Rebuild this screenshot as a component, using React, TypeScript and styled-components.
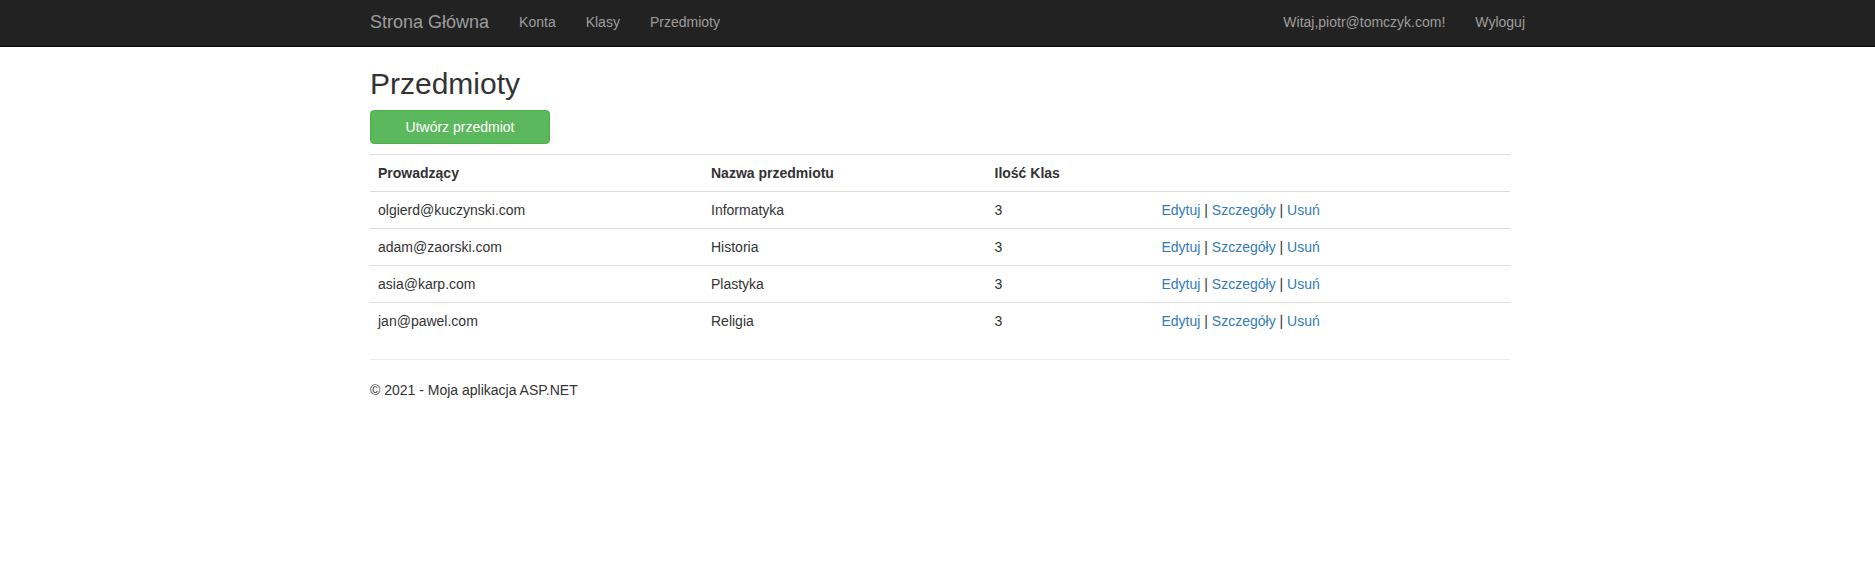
import React from "react";
import styled, { createGlobalStyle } from "styled-components";

const GlobalStyle = createGlobalStyle`
  html, body {
    margin: 0;
    padding: 0;
    background: #fff;
  }
  body {
    font-family: "Liberation Sans", Arial, Helvetica, sans-serif;
    font-size: 14px;
    line-height: 1.42857143;
    color: #333;
  }
  * { box-sizing: border-box; }
`;

const Navbar = styled.nav`
  background: #222;
  border-bottom: 1px solid #080808;
  height: 47px;
`;

const Container = styled.div`
  width: 1170px;
  margin: 0 0 0 calc(50% - 582.5px);
  padding: 0 15px;
`;

const NavInner = styled(Container)`
  display: flex;
  height: 46px;
`;

const Brand = styled.a`
  margin-left: -15px;
  padding: 12px 15px 14px;
  font-size: 18px;
  line-height: 20px;
  color: #9d9d9d;
  text-decoration: none;
`;

const NavList = styled.ul<{ $right?: boolean }>`
  display: flex;
  list-style: none;
  margin: 0;
  padding: 0;
  margin-left: ${(p) => (p.$right ? "auto" : "0")};
  margin-right: ${(p) => (p.$right ? "-30px" : "0")};
`;

const NavLink = styled.a`
  display: block;
  padding: 12px 15px 14px;
  line-height: 20px;
  color: #9d9d9d;
  text-decoration: none;
`;

const Title = styled.h2`
  margin: 20px 0 10px;
  font-size: 30px;
  font-weight: 500;
  line-height: 1.1;
  color: #333;
`;

const ButtonRow = styled.p`
  margin: 0 0 10px;
`;

const SuccessButton = styled.a`
  display: inline-block;
  width: 180px;
  padding: 6px 12px;
  font-size: 14px;
  line-height: 20px;
  text-align: center;
  color: #fff;
  background: #5cb85c;
  border: 1px solid #4cae4c;
  border-radius: 4px;
  text-decoration: none;
  vertical-align: middle;
`;

const Table = styled.table`
  width: 100%;
  border-collapse: collapse;
  border-spacing: 0;
  table-layout: fixed;
  margin-bottom: 20px;
`;

const Th = styled.th`
  padding: 8px;
  line-height: 20px;
  text-align: left;
  font-weight: bold;
  vertical-align: top;
  border-top: 1px solid #ddd;
`;

const Td = styled.td`
  padding: 8px;
  line-height: 20px;
  vertical-align: top;
  border-top: 1px solid #ddd;
`;

const Link = styled.a`
  color: #337ab7;
  text-decoration: none;
`;

const Rule = styled.hr`
  margin: 20px 0;
  border: 0;
  border-top: 1px solid #eee;
  height: 0;
`;

const FooterText = styled.p`
  margin: 0 0 10px;
`;

const rows = [
  { teacher: "olgierd@kuczynski.com", subject: "Informatyka", count: 3 },
  { teacher: "adam@zaorski.com", subject: "Historia", count: 3 },
  { teacher: "asia@karp.com", subject: "Plastyka", count: 3 },
  { teacher: "jan@pawel.com", subject: "Religia", count: 3 },
];

export default function App() {
  return (
    <>
      <GlobalStyle />
      <Navbar>
        <NavInner>
          <Brand href="#">Strona Główna</Brand>
          <NavList>
            <li><NavLink href="#">Konta</NavLink></li>
            <li><NavLink href="#">Klasy</NavLink></li>
            <li><NavLink href="#">Przedmioty</NavLink></li>
          </NavList>
          <NavList $right>
            <li><NavLink href="#">Witaj,piotr@tomczyk.com!</NavLink></li>
            <li><NavLink href="#">Wyloguj</NavLink></li>
          </NavList>
        </NavInner>
      </Navbar>
      <Container>
        <Title>Przedmioty</Title>
        <ButtonRow>
          <SuccessButton href="#">Utwórz przedmiot</SuccessButton>
        </ButtonRow>
        <Table>
          <colgroup>
            <col style={{ width: 333 }} />
            <col style={{ width: 283.5 }} />
            <col style={{ width: 167 }} />
            <col />
          </colgroup>
          <tbody>
            <tr>
              <Th>Prowadzący</Th>
              <Th>Nazwa przedmiotu</Th>
              <Th>Ilość Klas</Th>
              <Th></Th>
            </tr>
            {rows.map((r) => (
              <tr key={r.teacher}>
                <Td>{r.teacher}</Td>
                <Td>{r.subject}</Td>
                <Td>{r.count}</Td>
                <Td>
                  <Link href="#">Edytuj</Link> | <Link href="#">Szczegóły</Link> |{" "}
                  <Link href="#">Usuń</Link>
                </Td>
              </tr>
            ))}
          </tbody>
        </Table>
        <Rule />
        <footer>
          <FooterText>© 2021 - Moja aplikacja ASP.NET</FooterText>
        </footer>
      </Container>
    </>
  );
}
